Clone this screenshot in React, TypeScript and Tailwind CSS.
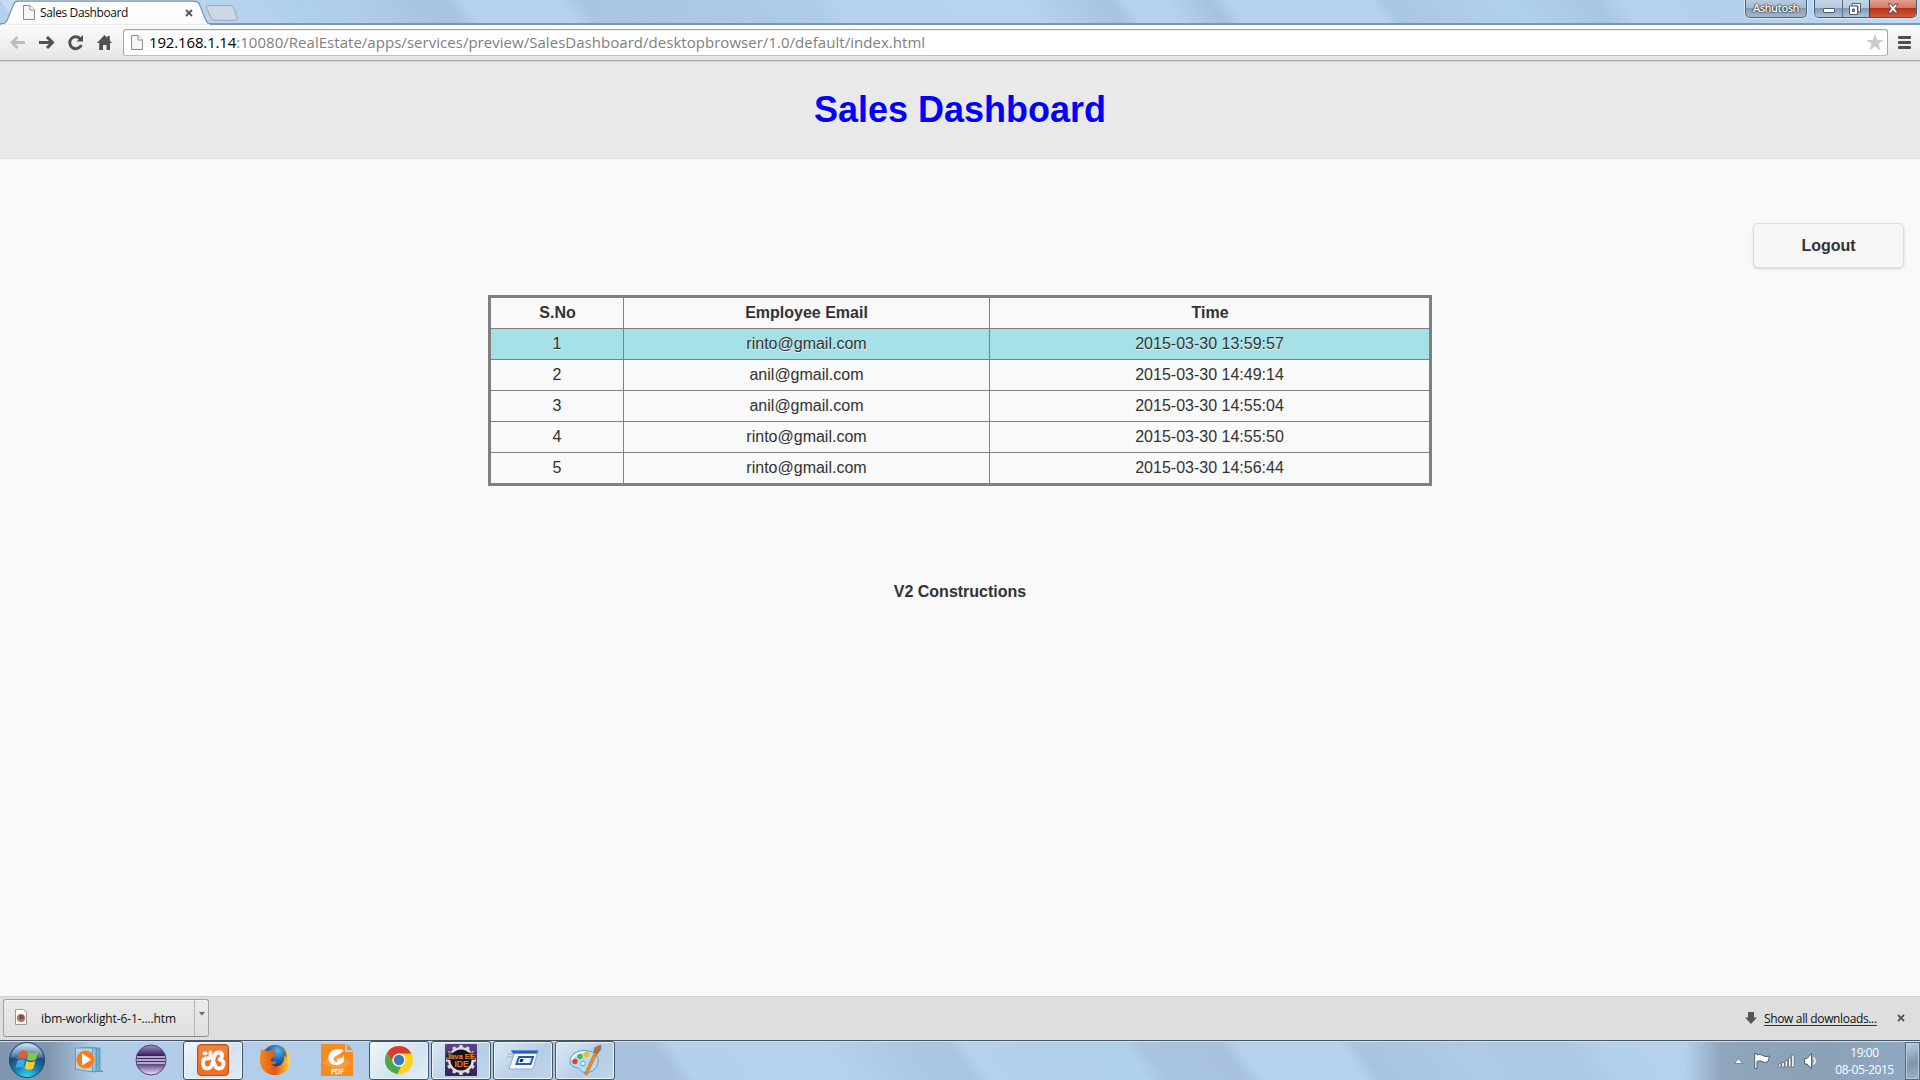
import React from "react";

const UI = "font-['Open_Sans','Noto_Sans',sans-serif]";

const rows = [
  ["1", "rinto@gmail.com", "2015-03-30 13:59:57"],
  ["2", "anil@gmail.com", "2015-03-30 14:49:14"],
  ["3", "anil@gmail.com", "2015-03-30 14:55:04"],
  ["4", "rinto@gmail.com", "2015-03-30 14:55:50"],
  ["5", "rinto@gmail.com", "2015-03-30 14:56:44"],
];

function PageIcon({ className = "" }: { className?: string }) {
  return (
    <svg className={className} width="12" height="15" viewBox="0 0 12 15">
      <path d="M.5 .5H7L11.5 5V14.5H.5Z" fill="#f6f6f6" stroke="#8c8c8c" />
      <path d="M7 .5V5H11.5" fill="#fff" stroke="#8c8c8c" />
    </svg>
  );
}

function CloseX({ className = "" }: { className?: string }) {
  return (
    <svg className={className} width="8" height="8" viewBox="0 0 8 8">
      <path d="M1 1L7 7M7 1L1 7" stroke="#555" strokeWidth="1.8" />
    </svg>
  );
}

function TitleBar() {
  return (
    <div className="relative h-[25px] shrink-0 overflow-hidden bg-[#b5d1ed]">
      <div className="absolute inset-0 origin-top-left skew-x-[36deg] bg-[linear-gradient(90deg,#c8dcf1_0px,#b8d3ee_205px,#b5d1ec_260px,#aecfea_300px,#b0cce8_350px,#a8c3de_425px,#a8c3de_445px,#b6d1ed_462px,#b6d1ed_560px,#a8c4df_582px,#adc9e5_720px,#aecbe6_805px,#b5d1ed_830px,#b8d3ee_1020px,#a6c2dd_1108px,#b5d1ed_1124px,#b5d1ed_1165px,#a5c1dc_1208px,#b6d1ed_1228px,#b5d1ec_1370px,#a9c6e2_1385px,#afcbe7_1450px,#b1d0ec_1510px,#a9c6e1_1590px,#b6d2ee_1625px,#b3cfeb_1720px,#c0dbf4_1900px)]" />
      <div className="absolute inset-x-0 bottom-0 h-[2px] bg-[#7288a4]/80" />
      <div className="relative flex h-full items-start">
        <div className="relative h-[25px] w-[212px]">
          <svg className="absolute inset-0" width="212" height="25" viewBox="0 0 212 25">
            <defs>
              <linearGradient id="tab" x1="0" y1="0" x2="0" y2="1">
                <stop offset="0" stopColor="#fff" />
                <stop offset="1" stopColor="#fbfbfb" />
              </linearGradient>
            </defs>
            <path d="M0 25V24.3C4 24.3 6 23 7.500 19.500L13.500 4.500C14.500 2 15.500 1.200 18 1.200H194C197 1.200 198.500 2 199.500 4.500L205.500 19.500C207 23 208 24.300 212 24.300V25Z" fill="url(#tab)" stroke="#7f93ab" strokeWidth="1.2" />
            <rect x="1" y="24.300" width="209" height="1" fill="#fbfbfb" />
          </svg>
          <div className="relative flex h-[25px] items-center pl-[23px]">
            <PageIcon />
            <span className={`${UI} ml-[5px] w-[145px] whitespace-nowrap text-[12px] tracking-[-0.38px] text-[#111]`}>Sales Dashboard</span>
            <CloseX className="mt-px" />
          </div>
        </div>
        <svg className="-ml-[7px] mt-[5px]" width="34" height="16" viewBox="0 0 34 16">
          <path d="M3 .6H26Q28 .6 29 3L32 12.500Q33 15.300 30.500 15.300H10Q7 15.300 6 12.500L1.500 3Q.5 .6 3 .6Z" fill="#cdd8e4" stroke="#95a7bb" />
        </svg>
        <div className={`${UI} ml-auto flex h-[18px] w-[62px] items-center justify-center rounded-b-[5px] border border-t-0 border-[#4f647c] bg-[linear-gradient(#b6cce3_0%,#a8bdd4_45%,#8197af_46%,#a4b9d0_100%)] text-[11px] font-semibold tracking-[-0.5px] text-white shadow-[0_0_0_1px_#dbe9f6] [text-shadow:0_0_1px_#222,0_0_2px_#333,0_0_1px_#222]`}>Ashutosh</div>
        <div className="ml-[7px] mr-[3px] flex h-[18px] w-[103px] overflow-hidden rounded-b-[5px] border border-t-0 border-[#46566a] shadow-[0_0_0_1px_#dbe9f6]">
          <div className="flex w-[28px] items-center justify-center border-r border-[#5d7086] bg-[linear-gradient(#c4d6e9_0%,#b6cade_48%,#859bb3_50%,#abc4dd_100%)] pt-[3px]">
            <div className="h-[5px] w-[12px] rounded-[1px] border border-[#525c6b] bg-white" />
          </div>
          <div className="flex w-[27px] items-center justify-center border-r border-[#5d3038] bg-[linear-gradient(#c4d6e9_0%,#b6cade_48%,#859bb3_50%,#abc4dd_100%)] pr-[2px]">
            <svg width="12" height="12" viewBox="0 0 12 12">
              <path d="M3 .5H11.500V9H9V3H3Z" fill="#fff" stroke="#525c6b" />
              <path d="M.5 3H8.500V11.500H.5ZM3.500 6V8.500H5.500V6Z" fill="#fff" fillRule="evenodd" stroke="#525c6b" />
            </svg>
          </div>
          <div className="flex flex-1 items-center justify-center bg-[linear-gradient(#e3a090_0%,#d47a66_46%,#b8301a_48%,#d05a38_100%)]">
            <svg width="12" height="11" viewBox="0 0 12 11">
              <path d="M1 1H4L6 3.500L8 1H11L8 5.500L11 10H8L6 7.500L4 10H1L4 5.500Z" fill="#fff" stroke="#5c4452" />
            </svg>
          </div>
        </div>
      </div>
    </div>
  );
}

function Toolbar() {
  return (
    <div className="flex h-[37px] shrink-0 border-b border-[#d8d8d8] bg-[linear-gradient(#fbfbfb,#ececec_70%,#e2e2e2)] shadow-[inset_0_-1px_0_#a6a6a6]">
      <div className="flex w-[123px] items-start pl-[10px] pt-[10px]">
        <svg width="102" height="16" viewBox="0 0 102 16" fill="none">
          <path d="M15 7.500H3M7.500 2L2 7.500L7.500 13" stroke="#bdbdbd" strokeWidth="3" />
          <path d="M29 7.500H41M37 2L42.500 7.500L37 13" stroke="#505050" strokeWidth="3" />
          <path d="M70.500 4A6 6 0 1 0 71.300 10" stroke="#505050" strokeWidth="2.900" />
          <path d="M73 0V6.500H66.500Z" fill="#505050" />
          <path d="M94.500 0L87 8H89.200V15H93V10H96.500V15H100V8H102L99.800 5.700V1H97.300V3Z" fill="#505050" />
        </svg>
      </div>
      <div className="mt-[4px] flex h-[27px] w-[1765px] items-center rounded-[3px] border border-[#a5a5a5] border-b-[#bdbdbd] bg-white pl-[7px] pr-[3px] shadow-[inset_0_1px_0_#ececec]">
        <PageIcon className="mb-px" />
        <span className={`${UI} mb-[2px] ml-[6px] whitespace-nowrap text-[15px] leading-5 text-[#808080]`}>
          <span className="tracking-[-0.15px] text-black">192.168.1.14</span>
          <span className="tracking-[0.033px]">:10080/RealEstate/apps/services/preview/SalesDashboard/desktopbrowser/1.0/default/index.html</span>
        </span>
        <svg className="ml-auto" width="18" height="17" viewBox="0 0 18 17">
          <path d="M9 0L11.300 6H17.600L12.600 9.800L14.500 16.500L9 12.500L3.500 16.500L5.400 9.800L.4 6H6.700Z" fill="#ccc" />
        </svg>
      </div>
      <div className="ml-[10px] mt-[11px] flex flex-col gap-[2px]">
        <div className="h-[3px] w-[13px] rounded-[1px] bg-[#4f4f4f]" />
        <div className="h-[3px] w-[13px] rounded-[1px] bg-[#4f4f4f]" />
        <div className="h-[3px] w-[13px] rounded-[1px] bg-[#4f4f4f]" />
      </div>
    </div>
  );
}

function Content() {
  return (
    <main className="flex h-[934px] shrink-0 flex-col bg-[#f9f9f9] font-['Liberation_Sans',Arial,sans-serif] text-[16px] leading-5 text-[#333] [text-shadow:0_1px_0_#f3f3f3]">
      <header className="flex h-[97px] items-center justify-center border-b border-[#ddd] bg-[#e9e9e9]">
        <h1 className="text-[36px] font-bold leading-[46px] text-[#0000ff]">Sales Dashboard</h1>
      </header>
      <div className="mt-[64px] flex justify-end pr-4">
        <button className="h-[45px] w-[151px] rounded-[5px] border border-[#ddd] bg-[#f6f6f6] font-bold shadow-[0_1px_3px_rgba(0,0,0,0.15)] [text-shadow:0_1px_0_#f3f3f3]">Logout</button>
      </div>
      <div className="mx-auto mt-[27px] w-[944px] border-[3px] border-[#808080] text-center">
        <div className="grid h-[30px] grid-cols-[133px_366px_439px] font-bold leading-[30px]">
          <div className="border-r border-[#808080] pl-px">S.No</div>
          <div className="border-r border-[#808080]">Employee Email</div>
          <div className="pl-px">Time</div>
        </div>
        {rows.map((r, i) => (
          <div key={r[0]} className={`grid h-[31px] grid-cols-[133px_366px_439px] border-t border-[#808080] leading-[30px] ${i === 0 ? "bg-[#a5e1e7]" : ""}`}>
            <div className="border-r border-[#808080]">{r[0]}</div>
            <div className="border-r border-[#808080]">{r[1]}</div>
            <div>{r[2]}</div>
          </div>
        ))}
      </div>
      <footer className="mt-[96px] text-center font-bold">V2 Constructions</footer>
    </main>
  );
}

function DownloadBar() {
  return (
    <div className={`${UI} flex h-[44px] shrink-0 border-t border-[#cfcfcf] bg-[#dedede] text-[12px] text-[#111]`}>
      <div className="ml-[3px] mt-[2px] flex h-[38px] w-[206px] rounded-[3px] border border-[#a3a3a3] border-b-[#8c8c8c] bg-[linear-gradient(#eaeaea,#dfdfdf)] shadow-[inset_0_1px_0_#f5f5f5]">
        <div className="flex w-[191px] items-center border-r border-[#b5b5b5] pl-[11px]">
          <svg className="mb-[2px]" width="12" height="16" viewBox="0 0 12 16">
            <path d="M.5 .5H8.500L11.500 3.500V15.500H.5Z" fill="#fff" stroke="#999" />
            <circle cx="6" cy="9" r="4" fill="#e8641b" />
            <circle cx="6.500" cy="8" r="2.300" fill="#2a60ae" />
          </svg>
          <span className="ml-[14px] whitespace-nowrap pt-px tracking-[-0.12px]">ibm-worklight-6-1-....htm</span>
        </div>
        <svg className="ml-[4px] mt-[12px]" width="6" height="4" viewBox="0 0 6 4"><path d="M0 0H6L3 3.500Z" fill="#666" /></svg>
      </div>
      <div className="ml-auto flex items-center pr-[15px]">
        <svg className="mb-[2px]" width="12" height="12" viewBox="0 0 12 12"><path d="M3 0H9V5.500H12L6 12L0 5.500H3Z" fill="#555" /></svg>
        <span className="ml-[7px] h-[15px] w-[113px] whitespace-nowrap border-b border-[#333] leading-[15px] tracking-[-0.35px]">Show all downloads...</span>
        <CloseX className="mb-px ml-[20px]" />
      </div>
    </div>
  );
}

function WindowsOrb() {
  return (
    <svg className="ml-[8px]" width="38" height="38" viewBox="0 0 38 38">
      <defs>
        <radialGradient id="orb" cx=".5" cy="1" r=".95">
          <stop offset="0" stopColor="#35e0ff" />
          <stop offset=".35" stopColor="#1688bb" />
          <stop offset=".7" stopColor="#1d4a78" />
          <stop offset="1" stopColor="#6c9cc4" />
        </radialGradient>
        <linearGradient id="orbShine" x1="0" y1="0" x2="0" y2="1">
          <stop offset="0" stopColor="#e4f2fb" stopOpacity=".85" />
          <stop offset="1" stopColor="#8fb9d8" stopOpacity=".2" />
        </linearGradient>
      </defs>
      <circle cx="19" cy="19" r="17.500" fill="url(#orb)" stroke="#23476b" />
      <path d="M3 16A16.200 16.200 0 0 1 35 16Q19 22 3 16Z" fill="url(#orbShine)" />
      <path d="M12 10.500Q15.500 8 19 10.500L17.400 18Q14 16 9.800 18Z" fill="#ee5a24" />
      <path d="M20.500 11Q24.500 13.400 30 10.800L27.800 18.500Q23.500 21 18.800 18.500Z" fill="#8dc63f" />
      <path d="M9.400 19.500Q13.500 17.400 17 19.500L15.200 27Q12 24.800 7.500 27Z" fill="#42a5e8" />
      <path d="M18.400 20Q22.500 22.500 27.300 20L25.300 27.500Q21 30 16.600 27.600Z" fill="#fdc92e" />
    </svg>
  );
}

function MediaPlayer() {
  return (
    <svg className="ml-[29px]" width="29" height="26" viewBox="0 0 29 26">
      <path d="M10 1H25V23L28 24.500H20L10 22Z" fill="#6aaed2" stroke="#4c90b8" strokeWidth=".8" />
      <path d="M6 1H21V25L6 22Z" fill="#8cc8e4" stroke="#4c90b8" strokeWidth=".8" />
      <path d="M.5 1H17.500V25L.5 22Z" fill="#a9dbee" stroke="#4c90b8" strokeWidth=".8" />
      <circle cx="10.500" cy="12.500" r="9.200" fill="#f47b20" stroke="#fbb36b" strokeWidth=".8" />
      <path d="M7 6.500L16.500 12.500L7 18.500Z" fill="#fff" />
    </svg>
  );
}

function Eclipse() {
  return (
    <svg className="ml-[31px]" width="32" height="32" viewBox="0 0 32 32">
      <defs>
        <linearGradient id="ecl" x1="0" y1="0" x2="0" y2="1">
          <stop offset="0" stopColor="#a593c4" />
          <stop offset=".35" stopColor="#35205e" />
          <stop offset=".6" stopColor="#4b3578" />
          <stop offset="1" stopColor="#efe9f7" />
        </linearGradient>
      </defs>
      <circle cx="16" cy="16" r="15" fill="url(#ecl)" stroke="#55407c" />
      <path d="M2 13H30M1.500 16H30.500M2 19H30" stroke="#d9d1e8" strokeWidth="1.300" />
    </svg>
  );
}

function Xampp() {
  return (
    <svg width="32" height="32" viewBox="0 0 32 32">
      <rect x=".5" y=".5" width="31" height="31" rx="3.500" fill="#ef7020" stroke="#b9501a" />
      <path d="M2 2H30V11Q16 13 2 17Z" fill="#fff" opacity=".13" />
      <g fill="none" stroke="#fff" strokeWidth="3.800" strokeLinecap="round" strokeLinejoin="round">
        <path d="M7.500 9.300H8.500" />
        <path d="M13.500 8.500V13Q13 14.500 10.500 14.500H9Q6 14.500 6 19Q6 24.500 10.500 24.500Q13.500 24.500 14.500 21.500L17.500 12Q18.500 8.500 21.500 8.500Q25 8.500 25 11.500Q25 14.500 22.500 15.500Q26.500 16 26.500 20Q26 24.500 22 24.500Q19 24.500 18 21.500L16.500 18" />
      </g>
    </svg>
  );
}

function Firefox() {
  return (
    <svg className="ml-[16px]" width="32" height="32" viewBox="0 0 32 32">
      <defs>
        <linearGradient id="fox" x1="0" y1="0" x2="1" y2="0">
          <stop offset="0" stopColor="#ef8a1e" />
          <stop offset=".5" stopColor="#e2571a" />
          <stop offset=".8" stopColor="#f6a021" />
          <stop offset="1" stopColor="#fddb45" />
        </linearGradient>
        <radialGradient id="globe" cx=".6" cy=".25" r=".8">
          <stop offset="0" stopColor="#62b5ea" />
          <stop offset=".5" stopColor="#1f66b4" />
          <stop offset="1" stopColor="#0e2c66" />
        </radialGradient>
      </defs>
      <circle cx="16" cy="16" r="15" fill="url(#fox)" />
      <circle cx="16.500" cy="12.500" r="11.500" fill="url(#globe)" />
      <path d="M2.500 5L5.500 7.500Q8 6.300 11.500 7.300Q13 5.300 15.500 4.800Q13.800 7 14 9Q16 10 17 10.500Q16.500 12.500 13 13.500Q11 15.500 12.500 17.500Q15.500 16.500 18 18.500Q16 21 12.500 20.500Q17 24 21.500 21Q25.500 18 25.500 11Q27 12.500 27.300 14.500Q28 8 23.500 2.800Q31 7.500 31 16Q30.500 30.500 16 31Q3.500 30.500 1.300 19Q.5 11 2.500 5Z" fill="url(#fox)" />
    </svg>
  );
}

function Foxit() {
  return (
    <svg className="ml-[30px]" width="32" height="32" viewBox="0 0 32 32">
      <path d="M0 0H24V8H32V32H0Z" fill="#f78b1f" />
      <path d="M26 0L32 6H26Z" fill="#f78b1f" />
      <path d="M2 19L13 8L30 18L19 28Z" fill="#fff" opacity=".15" />
      <path d="M22.500 6.500C16 2.500 6.500 7 7.500 15C8.300 21.500 18 24 22.500 17C23.500 15.500 23 14 22.800 13.500C21 18 15 19.500 13 16.500C11 11.500 18 12 22.500 6.500Z" fill="#fff" />
      <path d="M16 15Q20 15.500 23 11.500V17Q21 20 17 20Z" fill="#fff" />
      <text x="16.500" y="30" textAnchor="middle" fontFamily="DejaVu Sans" fontSize="6.800" fill="#fff" stroke="#fff" strokeWidth=".3">PDF</text>
    </svg>
  );
}

function Chrome() {
  return (
    <svg width="30" height="30" viewBox="0 0 30 30">
      <circle cx="15" cy="15" r="14" fill="#fcd21d" />
      <path d="M2.900 8A14 14 0 0 1 27.500 8.500H15A6.500 6.500 0 0 0 9.400 18.300Z" fill="#dc3a2d" />
      <path d="M2.900 8L9.400 18.300A6.500 6.500 0 0 0 17 21.200L13.500 29A14 14 0 0 1 2.900 8Z" fill="#4ba84a" />
      <circle cx="15" cy="15" r="6.600" fill="#f4f4f4" />
      <circle cx="15" cy="15" r="5.200" fill="#3b78b8" />
    </svg>
  );
}

const teeth = [0, 30, 60, 90, 120, 150, 180, 210, 240, 270, 300, 330];

function JavaEE() {
  return (
    <svg width="32" height="32" viewBox="0 0 32 32">
      <defs>
        <linearGradient id="jee" x1="0" y1="0" x2="0" y2="1">
          <stop offset="0" stopColor="#5b4289" />
          <stop offset="1" stopColor="#33215a" />
        </linearGradient>
      </defs>
      <rect width="32" height="32" rx="1" fill="url(#jee)" />
      <circle cx="16" cy="16" r="11.800" fill="#15121c" stroke="#dcdcdc" strokeWidth="2.400" />
      {teeth.map((a) => (
        <rect key={a} x="14.300" y="1" width="3.400" height="3.500" fill="#dcdcdc" transform={`rotate(${a} 16 16)`} />
      ))}
      <rect x="1.500" y="8.500" width="29" height="7.500" fill="#1d1428" opacity=".8" />
      <text x="1.500" y="15.300" fontFamily="Liberation Sans" fontSize="7.700" fill="#ff8a20" stroke="#ff8a20" strokeWidth=".2">Java EE</text>
      <text x="9.500" y="23.300" fontFamily="Liberation Sans" fontSize="8.500" fill="#ff8a20" stroke="#ff8a20" strokeWidth=".2">IDE</text>
    </svg>
  );
}

function RunDialog() {
  return (
    <svg width="32" height="22" viewBox="0 0 32 22">
      <path d="M8 2H31L26 20H2Z" fill="#f3f6fa" stroke="#9aabc0" />
      <path d="M4 1.500H31L30 4.500H6" fill="#2e62b4" stroke="#5b8fd6" strokeWidth=".8" />
      <path d="M1 5H7M0 8H6" stroke="#8fb2e0" />
      <path d="M12 8H26L23.500 15H9.500Z" fill="#eef4fc" stroke="#2159b8" strokeWidth="2" />
      <path d="M13.500 10H16.500L15.500 13H12.500Z" fill="#1a2433" />
    </svg>
  );
}

function Paint() {
  return (
    <svg width="34" height="32" viewBox="0 0 34 32">
      <path d="M2 17C2 10 10 6 18 6.500C26 7 31 12 30 18C29 25 24 29 17 28.500C12 28 13 25 10 24C6 23 2 22 2 17Z" fill="#b5dcf1" stroke="#5f9ec4" />
      <path d="M4 16C5 11 11 8 17 8" fill="none" stroke="#eef9ff" strokeWidth="2" />
      <circle cx="7" cy="17.500" r="2.700" fill="#e23b30" />
      <circle cx="12" cy="12.500" r="2.700" fill="#52b548" />
      <circle cx="18.500" cy="10.500" r="2.700" fill="#f8b91c" />
      <circle cx="15" cy="19.500" r="2.300" fill="#e5f4fc" stroke="#5f9ec4" />
      <path d="M26 9L29 10L19 31L16.500 30Z" fill="#ec8a2c" stroke="#b96118" strokeWidth=".5" />
      <path d="M25.500 8.500Q25 4 28 2.500L33 .5Q34 4 32.500 6.500L29.500 10.500Z" fill="#9a7653" />
    </svg>
  );
}

function TaskButton({ children, active = false, className = "" }: { children: React.ReactNode; active?: boolean; className?: string }) {
  return (
    <div className={`flex h-[39px] w-[60px] items-center justify-center rounded-[3px] border border-[#425468] shadow-[inset_0_0_0_1px_#ecf4fb] ${active ? "bg-[linear-gradient(135deg,#f0f6fc,#d3e2f2_60%,#e2edf8)]" : "bg-[linear-gradient(135deg,#dbe8f5,#b5cde6_60%,#c0d6ec)]"} ${className}`}>
      {children}
    </div>
  );
}

function Taskbar() {
  return (
    <div className="relative h-[40px] shrink-0 overflow-hidden bg-[#b5d1ec]">
      <div className="absolute inset-0 origin-top-left skew-x-[36deg] bg-[linear-gradient(90deg,#b0cbe7_0px,#b3cfea_330px,#a8c2dd_600px,#a8c2dd_650px,#b5d0ec_668px,#b5d1ec_820px,#aac5df_915px,#aac5df_945px,#b5d1ed_962px,#b2cfea_1040px,#b0d0eb_1118px,#a9c4e0_1140px,#a8c2de_1218px,#b5d1ed_1234px,#b5d1ed_1336px,#a8c3df_1352px,#adcae6_1450px,#adc8e5_1560px,#b3d0ec_1600px,#b5d1ed_1690px)]" />
      <div className="absolute inset-y-0 left-0 w-[95px] bg-[linear-gradient(90deg,#7f96ae_50%,transparent)]" />
      <div className="absolute inset-y-0 right-0 w-[235px] bg-[linear-gradient(90deg,transparent,#8fa5bc_16%,#8ba1b8_60%,#8fa8c2)]" />
      <div className="absolute inset-x-0 top-0 h-[2px] border-b border-[#cfe0f0] bg-[#44556a]" />
      <div className="relative flex h-full items-center">
        <WindowsOrb />
        <MediaPlayer />
        <Eclipse />
        <TaskButton className="ml-[16px]" active><Xampp /></TaskButton>
        <Firefox />
        <Foxit />
        <TaskButton className="ml-[16px]" active><Chrome /></TaskButton>
        <TaskButton className="ml-[2px]"><JavaEE /></TaskButton>
        <TaskButton className="ml-[2px]"><RunDialog /></TaskButton>
        <TaskButton className="ml-[2px]"><Paint /></TaskButton>
        <svg className="ml-auto mt-px" width="84" height="18" viewBox="0 0 84 18">
          <path d="M.5 11.500L4.500 6.500L8.500 11.500Z" fill="#fff" stroke="#56677c" strokeWidth=".7" />
          <path d="M20.700 1.500H23V3Q26 1.500 28.500 3.500Q32 5.500 35.500 4Q34.500 8 34 9.500Q31 11.500 28 9.500Q25.500 8 23 9.500V16.500H20.700Z" fill="#fff" stroke="#3f5066" strokeWidth=".9" />
          <path d="M44.500 15V12H47V15ZM47.800 15V10.500H50.300V15ZM51.100 15V8.500H53.600V15ZM54.400 15V6H56.900V15ZM57.700 15V3H60.200V15Z" fill="#fff" stroke="#4a5b71" strokeWidth=".7" />
          <path d="M70.500 6.500H73L77.500 1.500V16.500L73 12H70.500Z" fill="#fff" stroke="#46576c" strokeWidth=".9" />
          <path d="M79.500 5.500Q82.500 9 79.500 12.500" fill="none" stroke="#fff" strokeWidth="1.400" />
        </svg>
        <div className={`${UI} ml-[8px] mr-[2px] w-[77px] pt-[2px] text-center text-[12px] leading-[17px] tracking-[-0.4px] text-white`}>
          <div>19:00</div>
          <div>08-05-2015</div>
        </div>
        <div className="mt-[2px] h-[38px] w-[15px] border border-[#53677f] bg-[linear-gradient(160deg,#bccddd,#7e95ae_55%,#9cb4cd)] shadow-[inset_0_0_0_1px_#bccbdc]" />
      </div>
    </div>
  );
}

export default function App() {
  return (
    <div className="flex h-[1080px] w-[1920px] flex-col overflow-hidden">
      <TitleBar />
      <Toolbar />
      <Content />
      <DownloadBar />
      <Taskbar />
    </div>
  );
}
